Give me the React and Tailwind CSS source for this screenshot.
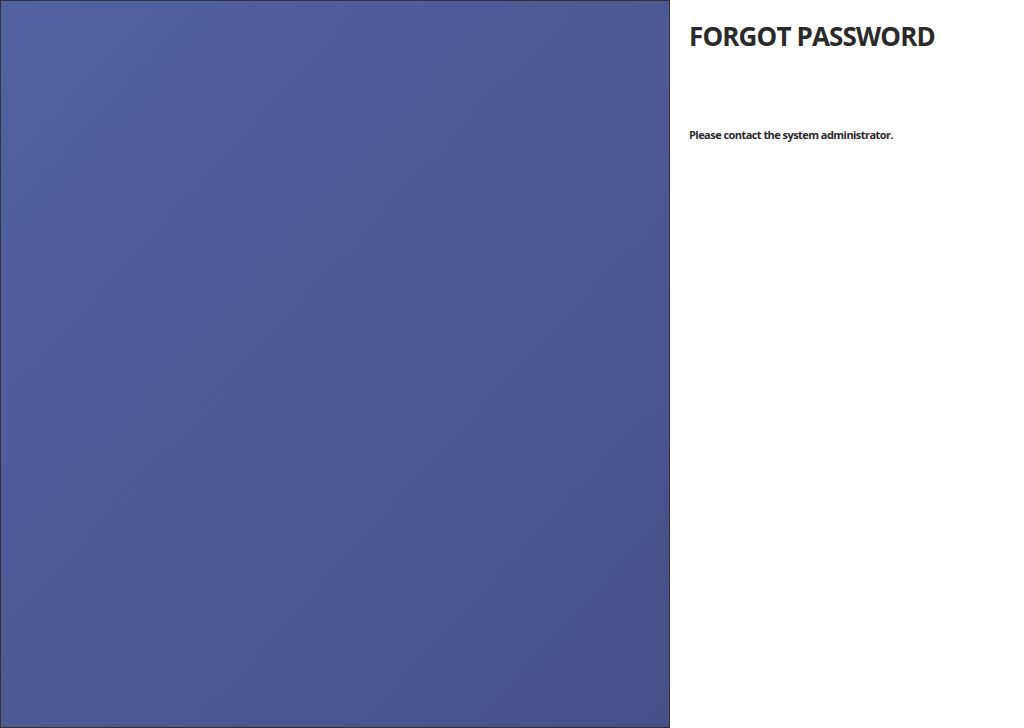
export default function App() {
  return (
    <div className="flex w-[1024px] h-[728px] bg-white" style={{ fontFamily: '"Open Sans", sans-serif' }}>
      <div className="w-[670px] h-[728px] border border-[#333] bg-gradient-to-br from-[#5262a0] to-[#45508a] shrink-0" />
      <div className="flex-1 pl-[19px] pt-[20px]">
        <h1 className="text-[26px] leading-[32px] font-bold text-[#2a2a2a] tracking-[-0.85px]">FORGOT PASSWORD</h1>
        <p className="mt-[75px] text-[11px] leading-[16px] font-bold text-[#2a2a2a] tracking-[-0.55px]">Please contact the system administrator.</p>
      </div>
    </div>
  );
}
